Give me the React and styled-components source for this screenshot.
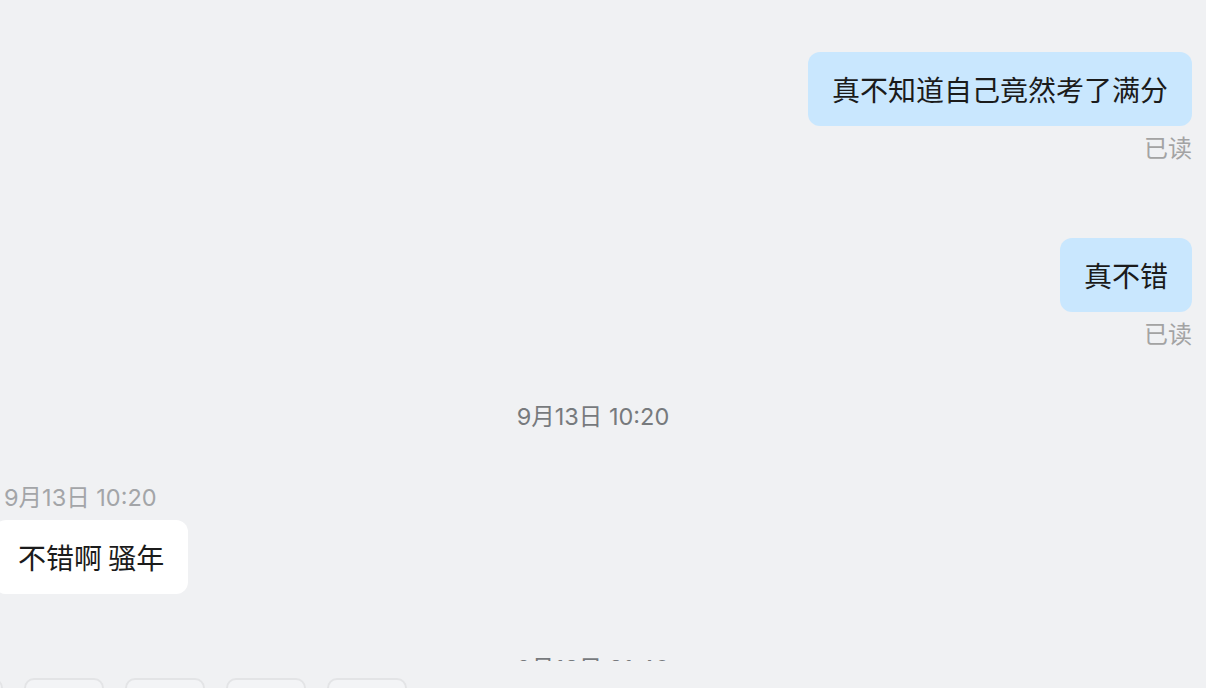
import React from "react";
import styled, { createGlobalStyle } from "styled-components";

const Global = createGlobalStyle`
  html, body { margin: 0; padding: 0; background: #f0f1f3; }
  body { font-family: Inter, "Noto Sans CJK SC", sans-serif; }
  * { box-sizing: border-box; }
`;

const Page = styled.div`
  width: 1206px;
  height: 688px;
  overflow: hidden;
  display: flex;
  flex-direction: column;
  background: #f0f1f3;
`;

const ChatArea = styled.div`
  height: 661px;
  flex: none;
  overflow: hidden;
  margin-left: -6px;
  padding: 52px 14px 0 0;
  display: flex;
  flex-direction: column;
`;

const Group = styled.div`
  display: flex;
  flex-direction: column;
  align-items: ${(p) => (p.$mine ? "flex-end" : "flex-start")};
  margin-top: ${(p) => p.$gap || 0}px;
`;

const Bubble = styled.div`
  font-family: "Noto Sans CJK SC", sans-serif;
  font-size: 28px;
  line-height: 38px;
  padding: 18px 24px;
  border-radius: 12px;
  color: #1b1b1b;
  white-space: nowrap;
  background: ${(p) => (p.$mine ? "#c9e7fe" : "#ffffff")};
`;

const ReadLabel = styled.div`
  font-size: 24px;
  line-height: 32px;
  margin-top: 7px;
  color: #a3a3a3;
`;

const CenterTime = styled.div`
  align-self: center;
  flex: none;
  margin-top: ${(p) => p.$gap}px;
  font-size: 23.5px;
  line-height: 32px;
  color: #777a7d;
`;

const SenderTime = styled.div`
  font-size: 23.5px;
  line-height: 32px;
  margin-left: 10px;
  margin-bottom: 6px;
  color: #a3a5a8;
`;

const QuickBar = styled.div`
  flex: 1;
  padding-top: 17px;
  overflow: hidden;
`;

const ChipRow = styled.div`
  display: flex;
  gap: 21px;
  margin-left: -77px;
`;

const Chip = styled.div`
  flex: none;
  width: 80px;
  height: 44px;
  border: 2px solid #e3e4e6;
  border-radius: 10px;
  background: #f3f4f6;
`;

export default function App() {
  return (
    <Page>
      <Global />
      <ChatArea>
        <Group $mine>
          <Bubble $mine>真不知道自己竟然考了满分</Bubble>
          <ReadLabel>已读</ReadLabel>
        </Group>
        <Group $mine $gap={73}>
          <Bubble $mine>真不错</Bubble>
          <ReadLabel>已读</ReadLabel>
        </Group>
        <CenterTime $gap={50}>9月13日 10:20</CenterTime>
        <Group $gap={49}>
          <SenderTime>9月13日 10:20</SenderTime>
          <Bubble>不错啊 骚年</Bubble>
        </Group>
        <CenterTime $gap={59}>9月13日 21:40</CenterTime>
      </ChatArea>
      <QuickBar>
        <ChipRow>
          {[0, 1, 2, 3, 4].map((i) => (
            <Chip key={i} />
          ))}
        </ChipRow>
      </QuickBar>
    </Page>
  );
}
